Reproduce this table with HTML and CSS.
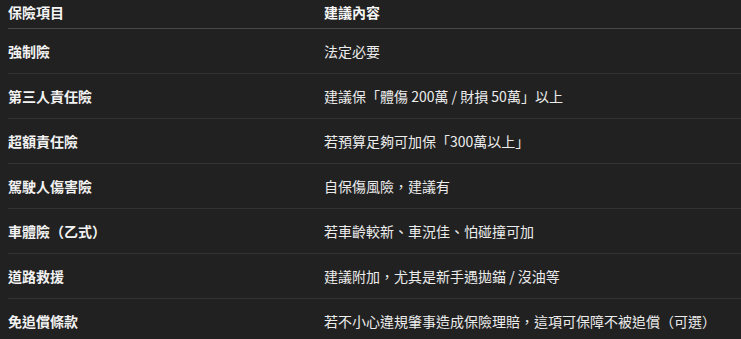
FILE: index.html
```html
<!DOCTYPE html>
<html lang="zh-Hant">
<head>
<meta charset="utf-8">
<title>保險建議</title>
<link rel="stylesheet" href="styles.css">
</head>
<body>
<div class="wrap">
<table class="ins">
<colgroup><col class="c1"><col class="c2"></colgroup>
<thead>
<tr><th>保險項目</th><th>建議內容</th></tr>
</thead>
<tbody>
<tr><td>強制險</td><td>法定必要</td></tr>
<tr><td>第三人責任險</td><td>建議保「體傷 200萬 / 財損 50萬」以上</td></tr>
<tr><td>超額責任險</td><td>若預算足夠可加保「300萬以上」</td></tr>
<tr><td>駕駛人傷害險</td><td>自保傷風險，建議有</td></tr>
<tr><td>車體險（乙式）</td><td>若車齡較新、車況佳、怕碰撞可加</td></tr>
<tr><td>道路救援</td><td>建議附加，尤其是新手遇拋錨 / 沒油等</td></tr>
<tr><td>免追償條款</td><td>若不小心違規肇事造成保險理賠，這項可保障不被追償（可選）</td></tr>
</tbody>
</table>
</div>
</body>
</html>
```
FILE: styles.css
```css
html, body {
  margin: 0;
  padding: 0;
  background: #212121;
}
.wrap {
  padding-left: 8px;
  overflow: hidden;
}
.ins {
  width: 733px;
  border-collapse: collapse;
  table-layout: fixed;
  font-family: "Noto Sans CJK TC", "Noto Sans", sans-serif;
  font-size: 14px;
  line-height: 20px;
  color: #ececec;
}
.c1 { width: 308px; }
.ins th {
  text-align: left;
  font-weight: 700;
  color: #f5f5f5;
  padding: 2px 8px 6px 8px;
  border-bottom: 1px solid #4a4a4a;
}
.ins td {
  padding: 12px 8px;
  border-bottom: 1px solid #333333;
  white-space: nowrap;
}
.ins th:first-child, .ins td:first-child {
  padding-left: 0;
  font-weight: 700;
}
.ins td:first-child { color: #f2f2f2; }
```
